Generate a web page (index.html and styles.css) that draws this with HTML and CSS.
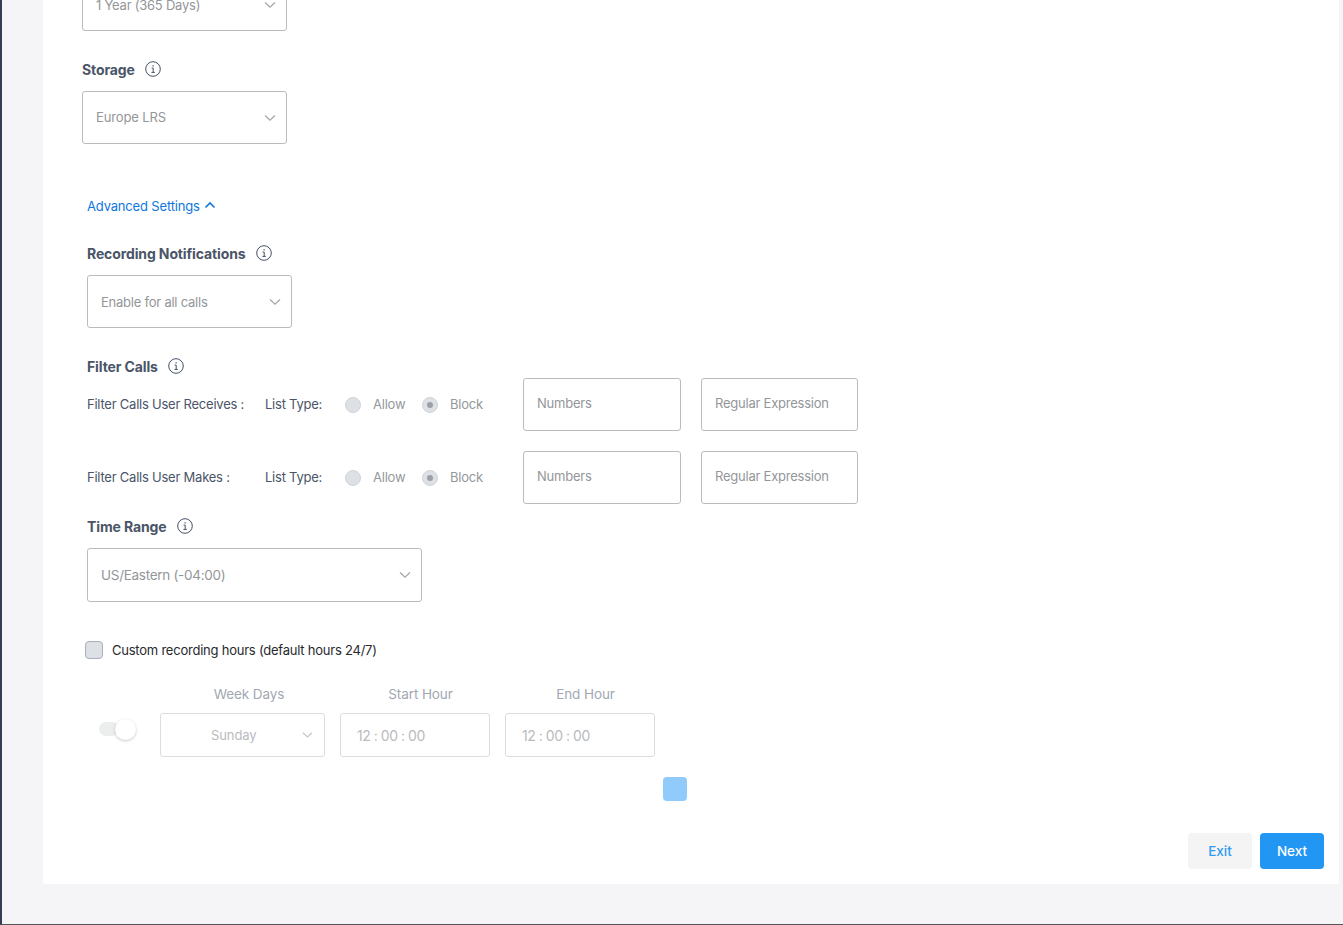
FILE: index.html
```html
<!DOCTYPE html>
<html lang="en">
<head>
<meta charset="utf-8">
<title>Recording settings</title>
<link rel="stylesheet" href="styles.css">
</head>
<body>
<svg class="defs" width="0" height="0" aria-hidden="true">
  <symbol id="info" viewBox="0 0 16 16">
    <circle cx="8" cy="8" r="7.3" fill="none" stroke="currentColor" stroke-width="1"/>
    <path d="M6.6 7.1H8.2V11.2M6.4 11.4H9.8" fill="none" stroke="currentColor" stroke-width="1"/>
    <rect x="7.5" y="4.2" width="1.2" height="1.3" fill="currentColor"/>
  </symbol>
  <symbol id="chev" viewBox="0 0 12 8">
    <path d="M1 1.5 6 6.2 11 1.5" fill="none" stroke="currentColor" stroke-width="1.3"/>
  </symbol>
</svg>
<main class="panel">
  <div class="select first"><span>1 Year (365 Days)</span><svg class="chev"><use href="#chev"/></svg></div>
  <div class="label storage-label">Storage <svg class="info"><use href="#info"/></svg></div>
  <div class="select"><span class="up">Europe LRS</span><svg class="chev"><use href="#chev"/></svg></div>

  <section class="advanced">
    <div class="adv-link">Advanced Settings
      <svg class="chev-up" viewBox="0 0 12 8"><path d="M1.5 6.5 6 2 10.5 6.5" fill="none" stroke="currentColor" stroke-width="1.6"/></svg>
    </div>

    <div class="label rec-label">Recording Notifications <svg class="info"><use href="#info"/></svg></div>
    <div class="select"><span>Enable for all calls</span><svg class="chev"><use href="#chev"/></svg></div>

    <div class="label filter-label">Filter Calls <svg class="info"><use href="#info"/></svg></div>
    <div class="filter-row">
      <span class="row-name">Filter Calls User Receives :</span>
      <span class="list-type">List Type:</span>
      <span class="radio"></span><span class="radio-text allow">Allow</span>
      <span class="radio checked"></span><span class="radio-text block">Block</span>
      <div class="input">Numbers</div>
      <div class="input">Regular Expression</div>
    </div>
    <div class="filter-row second">
      <span class="row-name">Filter Calls User Makes :</span>
      <span class="list-type">List Type:</span>
      <span class="radio"></span><span class="radio-text allow">Allow</span>
      <span class="radio checked"></span><span class="radio-text block">Block</span>
      <div class="input">Numbers</div>
      <div class="input">Regular Expression</div>
    </div>

    <div class="label time-label">Time Range <svg class="info"><use href="#info"/></svg></div>
    <div class="select wide"><span>US/Eastern (-04:00)</span><svg class="chev"><use href="#chev"/></svg></div>

    <label class="check-row"><span class="checkbox"></span>Custom recording hours (default hours 24/7)</label>

    <div class="hours">
      <div class="toggle"><span class="knob"></span></div>
      <div class="col day"><div class="col-title">Week Days</div>
        <div class="field day-field"><span>Sunday</span><svg class="chev"><use href="#chev"/></svg></div></div>
      <div class="col time"><div class="col-title">Start Hour</div><div class="field">12 : 00 : 00</div></div>
      <div class="col time"><div class="col-title">End Hour</div><div class="field">12 : 00 : 00</div></div>
    </div>
    <div class="add-wrap"><span class="add"></span></div>
  </section>

  <footer class="actions">
    <button class="btn exit">Exit</button>
    <button class="btn next">Next</button>
  </footer>
</main>
</body>
</html>
```
FILE: styles.css
```css
* { box-sizing: border-box; }
html, body { margin: 0; height: 925px; overflow: hidden; }
body {
  background: #f5f5f7;
  border-left: 2px solid #343e55;
  border-bottom: 1px solid #555;
  font-family: Inter, "Liberation Sans", sans-serif;
  font-size: 13px;
  letter-spacing: -0.23px;
  color: #4a5568;
}
.defs { position: absolute; }
.panel {
  margin: -22px 4px 0 41px;
  height: 906px;
  background: #fff;
  padding-left: 39px;
  display: flow-root;
}
.select {
  width: 205px;
  height: 53px;
  border: 1px solid #b9bbbe;
  border-radius: 3px;
  padding: 0 10px 0 13px;
  display: flex;
  align-items: center;
  justify-content: space-between;
  color: #939699;
}
.up { margin-top: -2px; letter-spacing: -0.13px; }
.select.wide { width: 335px; height: 54px; font-size: 13.5px; letter-spacing: -0.29px; }
.chev { width: 12px; height: 8px; color: #a4a7ab; }
.label {
  display: flex;
  align-items: center;
  gap: 10px;
  font-weight: 700;
  font-size: 14px;
  letter-spacing: -0.12px;
  height: 20px;
  padding-bottom: 2px;
  color: #4a5568;
}
.info { width: 16px; height: 16px; color: #445066; }
.storage-label { margin: 29px 0 11px; }
.advanced { margin: 52px 0 0 5px; }
.adv-link {
  display: flex;
  align-items: center;
  gap: 4px;
  height: 20px;
  color: #0f76de;
  letter-spacing: -0.17px;
}
.chev-up { width: 12px; height: 8px; margin-top: -3px; }
.rec-label { margin: 28px 0 11px; }
.filter-label { margin: 29px 0 1px; }
.filter-row { display: flex; align-items: center; height: 53px; }
.filter-row.second { margin-top: 20px; }
.row-name, .list-type { margin-top: -1px; }
.row-name { width: 178px; }
.list-type { width: 80px; }
.radio {
  width: 16px;
  height: 16px;
  border-radius: 50%;
  background: #dde0e4;
  border: 1px solid #cfd3d8;
  display: flex;
  align-items: center;
  justify-content: center;
}
.radio.checked::after {
  content: "";
  width: 6px;
  height: 6px;
  border-radius: 50%;
  background: #9a9fa8;
}
.radio-text { color: #94979b; margin: -1px 0 0 12px; }
.allow { width: 49px; }
.block { width: 73px; }
.input {
  width: 158px;
  height: 53px;
  border: 1px solid #b9bbbe;
  border-radius: 3px;
  padding: 0 13px 4px;
  display: flex;
  align-items: center;
  color: #939699;
  margin-right: 20px;
}
.input:last-child { margin-right: 0; width: 157px; }
.time-label { margin: 13px 0 11px; }
.check-row {
  display: flex;
  align-items: center;
  gap: 9px;
  height: 18px;
  margin: 39px 0 0 -2px;
  color: #27292d;
}
.checkbox {
  width: 18px;
  height: 18px;
  border-radius: 4px;
  background: #dde1e6;
  border: 1px solid #a9afb8;
}
.hours { display: flex; margin-top: 25px; }
.toggle {
  position: relative;
  width: 20px;
  height: 14px;
  border-radius: 7px;
  background: #eceded;
  margin: 38px 41px 0 12px;
  flex: none;
}
.knob {
  position: absolute;
  left: 16px;
  top: -3px;
  width: 21px;
  height: 21px;
  border-radius: 50%;
  background: #fff;
  box-shadow: 0 1px 3px rgba(0, 0, 0, .22);
}
.col-title {
  text-align: center;
  color: #a2a8b2;
  font-size: 13.5px;
  letter-spacing: -0.1px;
  height: 20px;
  margin: 0 0 9px;
  line-height: 20px;
}
.day { width: 165px; margin-right: 15px; }
.day .col-title { width: 178px; }
.time { width: 150px; margin-right: 15px; }
.time .col-title { width: 161px; }
.field {
  height: 44px;
  border: 1px solid #dcdddf;
  border-radius: 3px;
  display: flex;
  align-items: center;
  padding-left: 16px;
  color: #b9bbbe;
  font-size: 14px;
  letter-spacing: -0.47px;
}
.day-field {
  justify-content: space-between;
  padding: 0 11px 0 50px;
  font-size: 13px;
  letter-spacing: -0.1px;
}
.day-field .chev { width: 11px; color: #c4c6c9; }
.add-wrap { padding: 20px 0 0 576px; height: 44px; }
.add {
  display: block;
  width: 24px;
  height: 24px;
  border-radius: 4px;
  background: #90cbfb;
}
.actions {
  display: flex;
  justify-content: flex-end;
  gap: 8px;
  margin: 32px 15px 0 0;
}
.btn {
  width: 64px;
  height: 36px;
  border: 0;
  border-radius: 4px;
  font-family: inherit;
  font-size: 13.5px;
  font-weight: 500;
}
.exit { background: #f4f4f5; color: #2f9bf2; }
.next { background: #2196f3; color: #fff; }
```
